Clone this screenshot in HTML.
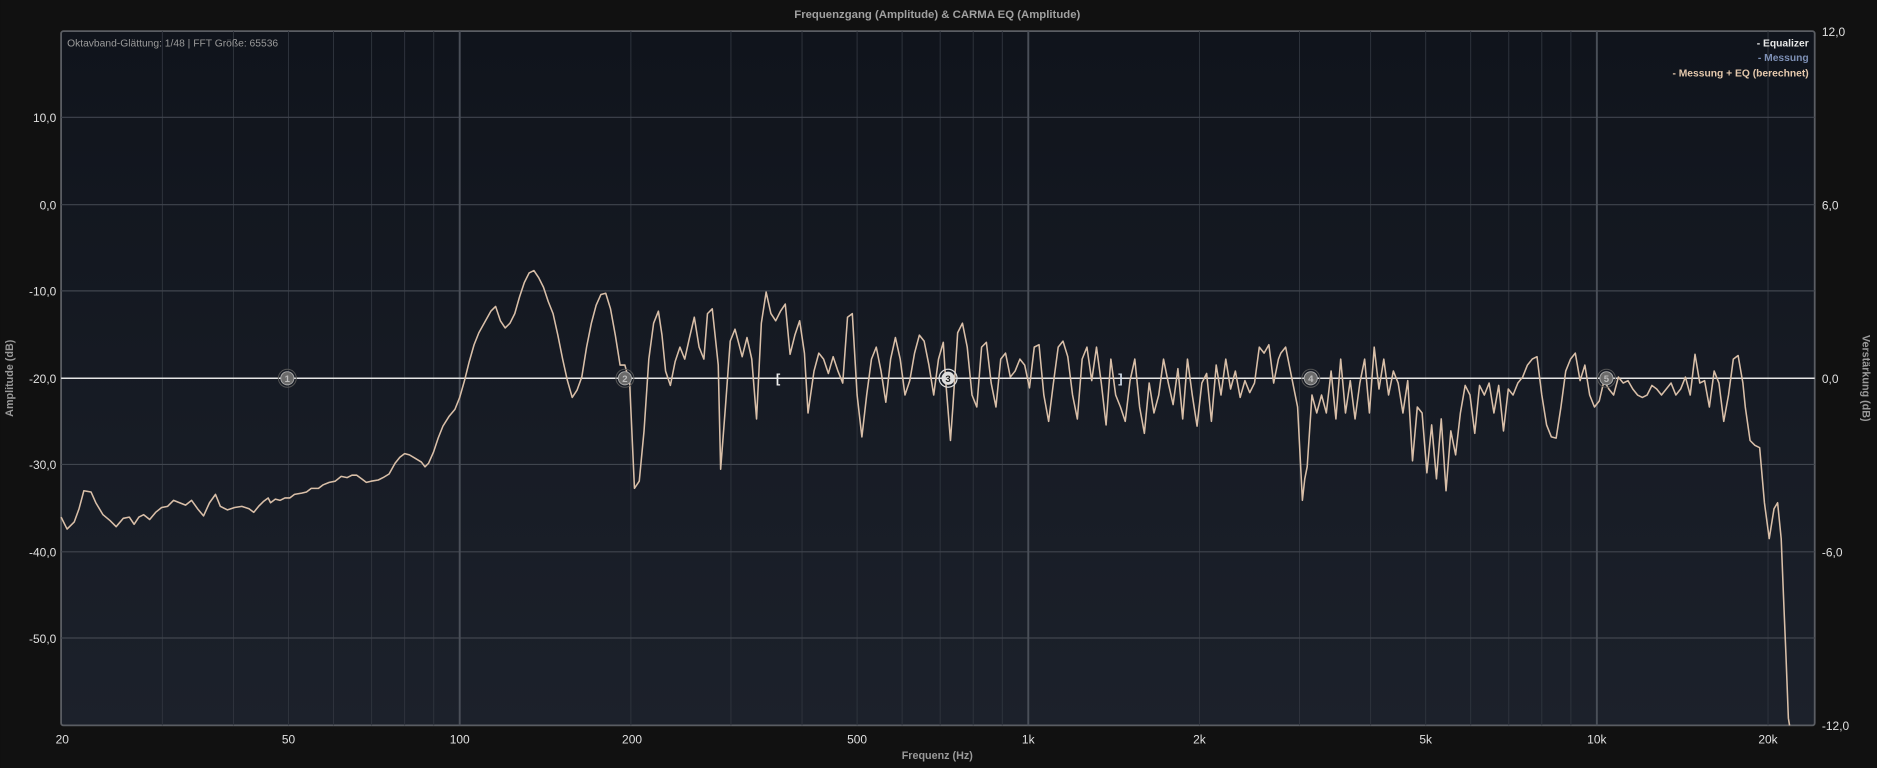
<!DOCTYPE html>
<html><head><meta charset="utf-8"><style>
html,body{margin:0;padding:0;background:#111111;width:1877px;height:768px;overflow:hidden}
svg{display:block}
text{font-family:"Liberation Sans",Arial,sans-serif}
</style></head><body>
<svg width="1877" height="768" viewBox="0 0 1568 641.6" xmlns="http://www.w3.org/2000/svg">
<defs>
<linearGradient id="bg" x1="0" y1="0" x2="0" y2="1">
<stop offset="0" stop-color="#10141c"/><stop offset="1" stop-color="#1c212b"/>
</linearGradient>
</defs>
<rect width="1568" height="641.6" fill="#111111"/>
<rect x="51" y="26" width="1465" height="580" rx="2" fill="url(#bg)" stroke="#5a5d63" stroke-width="1.5"/>
<g stroke="#2f343d" stroke-width="0.8">
<line x1="135.6" y1="26" x2="135.6" y2="606"/><line x1="195" y1="26" x2="195" y2="606"/><line x1="241" y1="26" x2="241" y2="606"/><line x1="278.6" y1="26" x2="278.6" y2="606"/><line x1="310.4" y1="26" x2="310.4" y2="606"/><line x1="338" y1="26" x2="338" y2="606"/><line x1="362.3" y1="26" x2="362.3" y2="606"/>
<line x1="527" y1="26" x2="527" y2="606"/><line x1="610.6" y1="26" x2="610.6" y2="606"/><line x1="670" y1="26" x2="670" y2="606"/><line x1="716" y1="26" x2="716" y2="606"/><line x1="753.6" y1="26" x2="753.6" y2="606"/><line x1="785.4" y1="26" x2="785.4" y2="606"/><line x1="813" y1="26" x2="813" y2="606"/><line x1="837.3" y1="26" x2="837.3" y2="606"/>
<line x1="1002" y1="26" x2="1002" y2="606"/><line x1="1085.6" y1="26" x2="1085.6" y2="606"/><line x1="1145" y1="26" x2="1145" y2="606"/><line x1="1191" y1="26" x2="1191" y2="606"/><line x1="1228.6" y1="26" x2="1228.6" y2="606"/><line x1="1260.4" y1="26" x2="1260.4" y2="606"/><line x1="1288" y1="26" x2="1288" y2="606"/><line x1="1312.3" y1="26" x2="1312.3" y2="606"/>
<line x1="1477" y1="26" x2="1477" y2="606"/>
</g>
<g stroke="#40454e" stroke-width="1">
<line x1="51" y1="98" x2="1516" y2="98"/><line x1="51" y1="171" x2="1516" y2="171"/><line x1="51" y1="243" x2="1516" y2="243"/><line x1="51" y1="388" x2="1516" y2="388"/><line x1="51" y1="461" x2="1516" y2="461"/><line x1="51" y1="533" x2="1516" y2="533"/>
</g>
<g stroke="#4a4f58" stroke-width="1.6">
<line x1="384" y1="26" x2="384" y2="606"/><line x1="859" y1="26" x2="859" y2="606"/><line x1="1334" y1="26" x2="1334" y2="606"/>
</g>
<line x1="51" y1="316" x2="1516" y2="316" stroke="#e6e6e6" stroke-width="1.2"/>
<polyline fill="none" stroke="#d9bfa8" stroke-width="1.3" stroke-linejoin="round" points="51,432 56,442 62,436 66,425 70,410 76,411 80,420 86,430 92,435 97,440 103,433 108,432 112,438 116,432 120,430 125,434 130,428 135,424 140,423 145,418 150,420 155,422 160,418 165,425 170,431 175,420 180,413 184,423 190,426 196,424 202,423 208,425 212,428 216,423 220,419 224,416 226,420 230,417 234,418 238,416 242,416 246,413 252,412 256,411 260,408 266,408 270,405 275,403 280,402 285,398 290,399 294,397 298,397 302,400 306,403 310,402 316,401 320,399 325,396 330,387 334,382 338,379 342,380 347,383 352,386 355,390 358,387 362,378 366,366 370,356 375,348 380,342 384,332 388,318 392,302 396,288 400,278 405,269 410,260 414,256 418,268 422,274 426,270 430,262 434,248 438,236 442,228 446,226 450,232 454,240 458,252 462,262 466,280 470,300 474,318 478,332 482,326 486,315 490,290 494,270 498,255 502,246 506,245 510,258 514,280 518,305 522,305 526,320 530,408 534,402 538,360 542,300 546,270 550,260 553,280 556,310 560,322 564,302 568,290 572,300 576,282 580,265 584,290 588,300 591,262 595,258 600,305 602,392 606,340 610,285 614,275 620,298 624,282 628,300 632,350 636,270 640,244 644,262 648,268 652,260 656,254 660,296 664,280 668,268 672,295 675,345 680,310 684,295 688,300 692,312 696,298 700,310 704,320 708,265 712,262 716,330 720,365 724,330 728,300 732,290 736,310 740,336 744,300 748,282 752,300 756,330 760,318 764,295 768,280 772,285 776,305 780,330 784,300 788,286 790,318 794,368 796,340 800,278 804,270 808,290 812,330 816,340 820,290 824,286 828,320 832,340 836,300 840,295 844,315 848,310 852,300 856,305 860,324 864,290 868,288 872,330 876,352 880,320 884,290 888,285 892,298 896,330 900,350 904,300 908,290 912,318 916,290 920,320 924,355 928,300 932,330 936,340 940,352 944,318 948,300 952,340 956,362 960,320 964,345 968,330 972,300 976,320 980,338 984,308 988,350 992,300 996,330 1000,356 1004,320 1008,312 1012,352 1016,305 1020,330 1024,300 1028,325 1032,310 1036,332 1040,318 1044,328 1048,320 1052,290 1056,295 1060,288 1064,320 1068,300 1070,295 1074,290 1080,320 1084,340 1088,418 1090,400 1092,390 1096,330 1100,345 1104,330 1108,345 1112,310 1116,350 1120,300 1124,345 1128,318 1132,350 1136,320 1140,300 1144,345 1148,290 1152,325 1156,300 1160,330 1164,310 1168,320 1172,345 1176,318 1180,385 1184,340 1188,345 1192,395 1196,355 1200,400 1204,350 1208,410 1212,360 1216,380 1220,345 1224,322 1228,330 1232,362 1236,322 1240,330 1244,320 1248,345 1252,322 1256,360 1260,325 1264,330 1268,320 1272,315 1276,305 1280,300 1284,298 1288,330 1292,355 1296,365 1300,366 1304,340 1308,310 1312,300 1316,295 1320,318 1324,305 1328,330 1332,340 1336,335 1340,318 1344,325 1348,330 1352,315 1356,320 1360,318 1364,325 1368,330 1372,332 1376,330 1380,322 1384,325 1388,330 1392,325 1396,320 1400,330 1404,325 1408,315 1412,330 1416,296 1420,320 1424,318 1428,340 1432,310 1436,320 1440,352 1444,330 1448,300 1452,297 1456,320 1458,340 1462,368 1466,372 1470,374 1474,420 1478,450 1482,425 1485,420 1488,450 1490,500 1492,548 1494,600 1495,606"/>
<g font-size="8" font-weight="bold" text-anchor="middle">
<g fill="#6a6a6a" stroke="#aaa" stroke-width="0.8"><circle cx="240" cy="316" r="5.5"/><circle cx="522" cy="316" r="5.5"/><circle cx="1095" cy="316" r="5.5"/><circle cx="1342" cy="316" r="5.5"/></g>
<circle cx="240" cy="316" r="7.5" fill="none" stroke="#555" stroke-width="0.8"/><circle cx="522" cy="316" r="7.5" fill="none" stroke="#555" stroke-width="0.8"/><circle cx="1095" cy="316" r="7.5" fill="none" stroke="#555" stroke-width="0.8"/><circle cx="1342" cy="316" r="7.5" fill="none" stroke="#555" stroke-width="0.8"/>
<circle cx="792" cy="316" r="7.5" fill="none" stroke="#ddd" stroke-width="1"/><circle cx="792" cy="316" r="5.5" fill="#ddd"/>
<text x="240" y="319" fill="#bbb">1</text><text x="522" y="319" fill="#bbb">2</text><text x="792" y="319" fill="#222">3</text><text x="1095" y="319" fill="#bbb">4</text><text x="1342" y="319" fill="#bbb">5</text>
</g>
<text x="650" y="320" font-size="11" font-weight="bold" fill="#eee" text-anchor="middle">[</text>
<text x="936" y="320" font-size="11" font-weight="bold" fill="#cdd8e6" text-anchor="middle">]</text>
<text x="783" y="15" font-size="9.5" font-weight="bold" fill="#a0a0a0" text-anchor="middle">Frequenzgang (Amplitude) &amp; CARMA EQ (Amplitude)</text>
<text x="56" y="39" font-size="8.6" fill="#9a9a9a">Oktavband-Glättung: 1/48 | FFT Größe: 65536</text>
<g font-size="8.6" font-weight="bold" text-anchor="end">
<text x="1511" y="39" fill="#e8e8e8">- Equalizer</text>
<text x="1511" y="51" fill="#7d8fb5">- Messung</text>
<text x="1511" y="64" fill="#e5c9ad">- Messung + EQ (berechnet)</text>
</g>
<g font-size="10" fill="#e0e0e0" text-anchor="end">
<text x="47" y="102">10,0</text><text x="47" y="175">0,0</text><text x="47" y="247">-10,0</text><text x="47" y="320">-20,0</text><text x="47" y="392">-30,0</text><text x="47" y="465">-40,0</text><text x="47" y="537">-50,0</text>
</g>
<g font-size="10" fill="#e0e0e0">
<text x="1522" y="30">12,0</text><text x="1522" y="175">6,0</text><text x="1522" y="320">0,0</text><text x="1522" y="465">-6,0</text><text x="1522" y="610">-12,0</text>
</g>
<g font-size="10" fill="#e0e0e0" text-anchor="middle">
<text x="52" y="621">20</text><text x="241" y="621">50</text><text x="384" y="621">100</text><text x="528" y="621">200</text><text x="716" y="621">500</text><text x="859" y="621">1k</text><text x="1002" y="621">2k</text><text x="1191" y="621">5k</text><text x="1334" y="621">10k</text><text x="1477" y="621">20k</text>
</g>
<text x="783" y="634" font-size="9" font-weight="bold" fill="#9a9a9a" text-anchor="middle">Frequenz (Hz)</text>
<text transform="translate(11,316) rotate(-90)" font-size="9" font-weight="bold" fill="#9a9a9a" text-anchor="middle">Amplitude (dB)</text>
<text transform="translate(1556,316) rotate(90)" font-size="9" font-weight="bold" fill="#9a9a9a" text-anchor="middle">Verstärkung (dB)</text>
</svg>
</body></html>
